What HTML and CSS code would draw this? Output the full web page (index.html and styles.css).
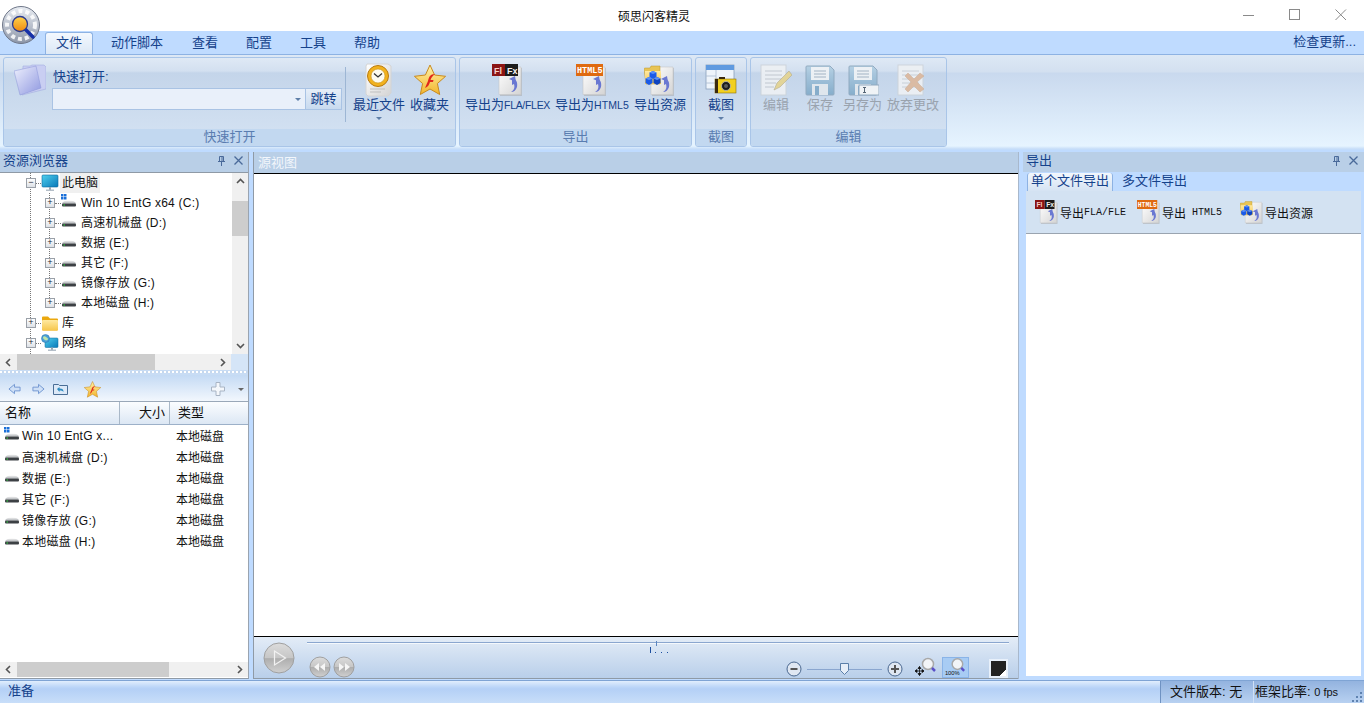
FILE: index.html
```html
<!DOCTYPE html>
<html lang="zh">
<head>
<meta charset="utf-8">
<title>硕思闪客精灵</title>
<link rel="stylesheet" href="styles.css">
</head>
<body>
<svg class="defs" width="0" height="0" aria-hidden="true">
  <defs>
    <linearGradient id="pg" x1="0" y1="0" x2="1" y2="1"><stop offset="0" stop-color="#fff"/><stop offset="1" stop-color="#d4d4d4"/></linearGradient>
    <linearGradient id="hd" x1="0" y1="0" x2="0" y2="1"><stop offset="0" stop-color="#f4f4f4"/><stop offset="1" stop-color="#aeb2b6"/></linearGradient>
    <linearGradient id="mon" x1="0" y1="0" x2="1" y2="1"><stop offset="0" stop-color="#4fd0ee"/><stop offset="1" stop-color="#0a78b8"/></linearGradient>
    <linearGradient id="fold" x1="0" y1="0" x2="0" y2="1"><stop offset="0" stop-color="#ffe9a0"/><stop offset="1" stop-color="#f6c64c"/></linearGradient>
    <linearGradient id="star" x1="0" y1="0" x2="0" y2="1"><stop offset="0" stop-color="#fff2a8"/><stop offset="1" stop-color="#f3b52c"/></linearGradient>
    <linearGradient id="btn" x1="0" y1="0" x2="0" y2="1"><stop offset="0" stop-color="#dcdcdc"/><stop offset=".5" stop-color="#c6c6c6"/><stop offset=".52" stop-color="#aeaeae"/><stop offset="1" stop-color="#d0d0d0"/></linearGradient>
    <linearGradient id="lens" x1="0" y1="0" x2="0" y2="1"><stop offset="0" stop-color="#ffd24a"/><stop offset="1" stop-color="#ef8a10"/></linearGradient>
    <linearGradient id="gear" x1="0" y1="0" x2="0" y2="1"><stop offset="0" stop-color="#e9edf3"/><stop offset="1" stop-color="#8d96a8"/></linearGradient>
    <linearGradient id="fldr" x1="0" y1="0" x2="1" y2="1"><stop offset="0" stop-color="#eef0fd"/><stop offset="1" stop-color="#8f98e0"/></linearGradient>
    <linearGradient id="flop" x1="0" y1="0" x2="0" y2="1"><stop offset="0" stop-color="#b3cfe3"/><stop offset="1" stop-color="#7fa9c8"/></linearGradient>

    <symbol id="i-drive" viewBox="0 0 16 16">
      <path d="M1 9.500C1.500 7.500 4 6.500 8 6.500s6.500 1 7 3z" fill="url(#hd)"/>
      <rect x="1" y="9.500" width="14" height="3" rx="1" fill="#3c4044"/>
      <rect x="2.500" y="10.500" width="1.500" height="1" fill="#30e040"/>
    </symbol>
    <symbol id="i-win" viewBox="0 0 16 16">
      <path d="M0 0h2.500v2.500H0zM3 0h2.500v2.500H3zM0 3h2.500v2.500H0zM3 3h2.500v2.500H3z" fill="#1a6fd8"/>
      <use href="#i-drive"/>
    </symbol>
    <symbol id="i-monitor" viewBox="0 0 18 18">
      <rect x="1" y="1" width="16" height="12" rx="1" fill="url(#mon)" stroke="#0b6a9e" stroke-width=".6"/>
      <rect x="8" y="13" width="2" height="3" fill="#9aa8b4"/><rect x="5" y="15.500" width="8" height="1.500" fill="#b4bec8"/>
    </symbol>
    <symbol id="i-lib" viewBox="0 0 18 18">
      <path d="M1 3.500a1 1 0 0 1 1-1h5l2 2h7a1 1 0 0 1 1 1v10a1 1 0 0 1-1 1H2a1 1 0 0 1-1-1z" fill="#eba80e"/>
      <rect x="1" y="6" width="16" height="10.500" rx="1" fill="url(#fold)"/>
    </symbol>
    <symbol id="i-net" viewBox="0 0 18 18">
      <rect x="4" y="4" width="13" height="9.500" rx="1" fill="url(#mon)" stroke="#0b6a9e" stroke-width=".5"/>
      <rect x="10" y="13.500" width="2" height="2.500" fill="#9aa8b4"/><rect x="7" y="15.500" width="8" height="1.500" fill="#b4bec8"/>
      <circle cx="4.500" cy="4.500" r="4" fill="#4b9fd8" stroke="#2773a8" stroke-width=".5"/>
      <path d="M2 3c1-1 2-1 3 0s2 1 2 2-2 2-3 1-2-1-2-3z" fill="#bfe6a8"/>
    </symbol>
    <symbol id="i-page" viewBox="0 0 32 32">
      <path d="M8 4h22v28H8z" fill="#a8a8a8" opacity=".5"/>
      <path d="M7 3h22v27.500H7z" fill="url(#pg)" stroke="#c8c8c8" stroke-width=".6"/>
      <path d="M20 14c4 1 6 4 5 9-1 3-3 5-6 5 3-2 4-4 3-8l-2 1z" fill="#6a78d2"/>
      <path d="M17 15l6-3 1 6z" fill="#6a78d2"/>
    </symbol>
    <symbol id="i-fl" viewBox="0 0 32 32">
      <use href="#i-page"/>
      <rect x="0" y="0" width="13" height="12" fill="#8a1414"/><rect x="13" y="0" width="13" height="12" fill="#1c1c1c"/>
      <text x="2" y="9.500" class="svg-t" fill="#f8d0c8">Fl</text><text x="15" y="9.500" class="svg-t" fill="#f4f4f4">Fx</text>
    </symbol>
    <symbol id="i-html" viewBox="0 0 32 32">
      <use href="#i-page"/>
      <rect x="0" y="0" width="27" height="12" fill="#df6a10"/>
      <text x="1" y="9.300" class="svg-h" fill="#fff">HTML5</text>
    </symbol>
    <symbol id="i-res" viewBox="0 0 32 32">
      <use href="#i-page"/>
      <path d="M0 5a1 1 0 0 1 1-1h5l1-2h9v18H2z" fill="#e8c455" stroke="#b8962c" stroke-width=".5"/>
      <rect x="1" y="7" width="16" height="13" fill="url(#fold)"/>
      <path d="M5.500 8.500L9 7l3.500 1.500V13L9 15l-3.500-2z" fill="#1a5ae8"/><path d="M5.500 8.500L9 10l3.500-1.500L9 7z" fill="#5a90f8"/>
      <path d="M1.500 14.500L5 13l3.500 1.500V19L5 21l-3.500-2z" fill="#1a5ae8"/><path d="M1.500 14.500L5 16l3.500-1.500L5 13z" fill="#5a90f8"/>
      <path d="M9.500 14.500L13 13l3.500 1.500V19L13 21l-3.500-2z" fill="#0f44c0"/><path d="M9.500 14.500L13 16l3.500-1.500L13 13z" fill="#5a90f8"/>
    </symbol>
    <symbol id="i-shot" viewBox="0 0 32 32">
      <rect x="1" y="1" width="28" height="24" fill="#eef4fb" stroke="#8aa0bc" stroke-width=".8"/>
      <rect x="1" y="1" width="28" height="5" fill="#5f9ae0"/>
      <path d="M1 12h10M1 19h10M11 6v19" stroke="#a8bad0" stroke-width=".8"/>
      <rect x="10" y="15" width="21" height="14" fill="#f2d020" stroke="#8a7010" stroke-width=".6"/>
      <rect x="10" y="15" width="3" height="14" fill="#3a2a10"/><rect x="14" y="13" width="6" height="2" fill="#3a2a10"/>
      <circle cx="21" cy="22" r="4.500" fill="#1c1c1c" stroke="#c8c8c8" stroke-width=".7"/><circle cx="21" cy="22" r="2" fill="#5a5a5a"/>
    </symbol>
    <symbol id="i-edit" viewBox="0 0 32 32">
      <rect x="1" y="1" width="25" height="30" fill="#eef1f4" stroke="#cdd3da"/>
      <path d="M5 7h17M5 11h17M5 15h17M5 19h11M5 23h9" stroke="#c0c6ce"/>
      <path d="M14 26l3-7 12-12 3 4-12 12z" fill="#e6d490" stroke="#b0a888" stroke-width=".6"/>
    </symbol>
    <symbol id="i-save" viewBox="0 0 32 32">
      <path d="M2 3a1 1 0 0 1 1-1h23l4 4v24a1 1 0 0 1-1 1H3a1 1 0 0 1-1-1z" fill="url(#flop)" stroke="#8ca6bc"/>
      <rect x="7" y="3" width="18" height="13" fill="#f0f3f6"/><path d="M10 7h12M10 10h12M10 13h12" stroke="#9fb0c0"/>
      <rect x="8" y="20" width="16" height="11" fill="#e2e8ee"/><rect x="11" y="22" width="4" height="9" fill="#7fa9c8"/>
    </symbol>
    <symbol id="i-saveas" viewBox="0 0 32 32">
      <use href="#i-save"/>
      <rect x="12" y="21" width="20" height="10" fill="#f4f6f8" stroke="#8ca6bc"/>
      <path d="M16 23.500h3M17.500 23.500v5M16 28.500h3" stroke="#4a5a6a" fill="none"/>
    </symbol>
    <symbol id="i-discard" viewBox="0 0 32 32">
      <rect x="1" y="1" width="25" height="30" fill="#eef1f4" stroke="#cdd3da"/>
      <path d="M5 7h17M5 11h17M5 15h17M5 19h17M5 23h17" stroke="#c8ced6"/>
      <path d="M8 12l3-3 6 6 6-6 4 3-7 6 7 7-4 3-6-6-6 6-3-3 6-7z" fill="#ddb89c" stroke="#c8a88e" stroke-width=".5"/>
    </symbol>
    <symbol id="i-clock" viewBox="0 0 32 34">
      <path d="M4 1h21l3 2v27l-3 3H5l-2-2V3z" fill="url(#pg)" stroke="#d4d4d4"/>
      <path d="M7 26h15M7 29h11" stroke="#bfbfbf"/>
      <circle cx="15" cy="13" r="10.500" fill="#f2b21e" stroke="#b87a10"/>
      <circle cx="15" cy="13" r="7" fill="#fdfbf0" stroke="#c89018" stroke-width=".6"/>
      <path d="M11 10.500l4 3.500 4-3.500" fill="none" stroke="#333" stroke-width="1.300"/>
    </symbol>
    <symbol id="i-star" viewBox="0 0 32 32">
      <path d="M16 1l4.600 10 11 1.300-8.200 7.200 2.300 11-9.700-5.500-9.700 5.500 2.300-11L.4 12.300l11-1.300z" fill="url(#star)" stroke="#c88a20" stroke-linejoin="round"/>
      <path d="M21 10c-5 0-6 3-7 7l-3 7c3-1 4-3 5-6h3l.5-2h-3c.5-2 2-4 4.500-6z" fill="#e0281c"/>
    </symbol>
    <symbol id="i-bigfolder" viewBox="0 0 32 34">
      <path d="M9 3h7l2-1h12l2 2v22l-24 6z" fill="#c9cef2" stroke="#9aa4dc" stroke-width=".5"/>
      <path d="M0 8l22-5 5 22L6 32z" fill="url(#fldr)" stroke="#8a94d8" stroke-width=".5"/>
    </symbol>
  </defs>
</svg>

<div class="app">
  <svg class="logo" viewBox="0 0 38 38" aria-hidden="true">
    <circle cx="19" cy="19" r="18.500" fill="url(#gear)" stroke="#6e7688"/>
    <circle cx="19" cy="19" r="14" fill="none" stroke="#fff" stroke-width="4" stroke-dasharray="4 3" opacity=".85"/>
    <path d="M23 23l8 8" stroke="#1630a8" stroke-width="3.500" stroke-linecap="round"/>
    <circle cx="18" cy="18" r="7.500" fill="url(#lens)" stroke="#2a3a90" stroke-width="1.300"/>
  </svg>

  <header class="titlebar">
    <span></span>
    <span class="title-text">硕思闪客精灵</span>
    <div class="win-btns">
      <span class="win-btn"><svg width="12" height="12" viewBox="0 0 12 12"><path d="M0 6.500h11" stroke="#8a8a8a"/></svg></span>
      <span class="win-btn"><svg width="12" height="12" viewBox="0 0 12 12"><rect x=".5" y=".5" width="10" height="10" fill="none" stroke="#8a8a8a"/></svg></span>
      <span class="win-btn"><svg width="12" height="12" viewBox="0 0 12 12"><path d="M.5.500l10.500 10.500M11 .5L.5 11" stroke="#8a8a8a"/></svg></span>
    </div>
  </header>

  <nav class="tabs">
    <span class="tab tab-active">文件</span>
    <span class="tab tab-script">动作脚本</span>
    <span class="tab">查看</span>
    <span class="tab">配置</span>
    <span class="tab">工具</span>
    <span class="tab">帮助</span>
    <span class="tab-update">检查更新...</span>
  </nav>

  <section class="ribbon">
    <div class="group group-open">
      <div class="group-body body-open">
        <svg class="big-folder" aria-hidden="true"><use href="#i-bigfolder"/></svg>
        <div class="open-form">
          <span class="open-label">快速打开:</span>
          <div class="combo">
            <span class="combo-input"><i class="arrow"></i></span>
            <span class="combo-btn">跳转</span>
          </div>
        </div>
        <span class="rib-sep"></span>
        <div class="rib-btn btn-recent"><svg class="rib-ico"><use href="#i-clock"/></svg><span class="rib-label">最近文件</span><i class="arrow"></i></div>
        <div class="rib-btn btn-fav"><svg class="rib-ico"><use href="#i-star"/></svg><span class="rib-label">收藏夹</span><i class="arrow"></i></div>
      </div>
      <div class="group-label">快速打开</div>
    </div>

    <div class="group group-export">
      <div class="group-body body-export">
        <div class="rib-btn"><svg class="rib-ico"><use href="#i-fl"/></svg><span class="rib-label">导出为<span class="lat">FLA/FLEX</span></span></div>
        <div class="rib-btn"><svg class="rib-ico"><use href="#i-html"/></svg><span class="rib-label">导出为<span class="lat lat-h">HTML5</span></span></div>
        <div class="rib-btn"><svg class="rib-ico"><use href="#i-res"/></svg><span class="rib-label">导出资源</span></div>
      </div>
      <div class="group-label">导出</div>
    </div>

    <div class="group group-shot">
      <div class="group-body body-shot">
        <div class="rib-btn"><svg class="rib-ico"><use href="#i-shot"/></svg><span class="rib-label">截图</span><i class="arrow"></i></div>
      </div>
      <div class="group-label">截图</div>
    </div>

    <div class="group group-edit">
      <div class="group-body body-edit">
        <div class="rib-btn off"><svg class="rib-ico"><use href="#i-edit"/></svg><span class="rib-label">编辑</span></div>
        <div class="rib-btn off b-save"><svg class="rib-ico"><use href="#i-save"/></svg><span class="rib-label">保存</span></div>
        <div class="rib-btn off b-saveas"><svg class="rib-ico"><use href="#i-saveas"/></svg><span class="rib-label">另存为</span></div>
        <div class="rib-btn off"><svg class="rib-ico"><use href="#i-discard"/></svg><span class="rib-label">放弃更改</span></div>
      </div>
      <div class="group-label">编辑</div>
    </div>
  </section>

  <main class="panels">
    <aside class="left">
      <div class="pane-head">
        <span class="pane-title">资源浏览器</span>
        <span class="pane-ctl"><svg width="9" height="10" viewBox="0 0 9 10"><path d="M2.500.5h4v5h-4zM1 5.500h7M4.500 5.500V10M5 1v4" fill="none" stroke="#4a6a9a"/></svg><svg width="9" height="9" viewBox="0 0 9 9"><path d="M.5.500l8 8M8.500.5l-8 8" stroke="#4a6a9a" stroke-width="1.300"/></svg></span>
      </div>

      <div class="tree-wrap">
        <div class="tree">
          <div class="t-row"><span class="exp">−</span><i class="dots"></i><svg class="t-ico"><use href="#i-monitor"/></svg><span class="t-text t-sel">此电脑</span></div>
          <div class="t-kids">
            <div class="t-row t-kid"><span class="exp">+</span><i class="dots dots-s"></i><svg class="d-ico"><use href="#i-win"/></svg><span class="t-text">Win 10 EntG x64 (C:)</span></div>
            <div class="t-row t-kid"><span class="exp">+</span><i class="dots dots-s"></i><svg class="d-ico"><use href="#i-drive"/></svg><span class="t-text">高速机械盘 (D:)</span></div>
            <div class="t-row t-kid"><span class="exp">+</span><i class="dots dots-s"></i><svg class="d-ico"><use href="#i-drive"/></svg><span class="t-text">数据 (E:)</span></div>
            <div class="t-row t-kid"><span class="exp">+</span><i class="dots dots-s"></i><svg class="d-ico"><use href="#i-drive"/></svg><span class="t-text">其它 (F:)</span></div>
            <div class="t-row t-kid"><span class="exp">+</span><i class="dots dots-s"></i><svg class="d-ico"><use href="#i-drive"/></svg><span class="t-text">镜像存放 (G:)</span></div>
            <div class="t-row t-kid"><span class="exp">+</span><i class="dots dots-s"></i><svg class="d-ico"><use href="#i-drive"/></svg><span class="t-text">本地磁盘 (H:)</span></div>
          </div>
          <div class="t-row"><span class="exp">+</span><i class="dots"></i><svg class="t-ico"><use href="#i-lib"/></svg><span class="t-text">库</span></div>
          <div class="t-row"><span class="exp">+</span><i class="dots"></i><svg class="t-ico"><use href="#i-net"/></svg><span class="t-text">网络</span></div>
        </div>
        <div class="vscroll">
          <svg class="chev" viewBox="0 0 9 9"><path d="M1 6l3.500-3.500L8 6" fill="none" stroke="#555" stroke-width="1.600"/></svg>
          <span class="vtrack"><i class="vthumb"></i></span>
          <svg class="chev" viewBox="0 0 9 9"><path d="M1 3l3.500 3.500L8 3" fill="none" stroke="#555" stroke-width="1.600"/></svg>
        </div>
      </div>
      <div class="hscroll hs-tree">
        <svg class="chev" viewBox="0 0 9 9"><path d="M6 1L2.500 4.500 6 8" fill="none" stroke="#555" stroke-width="1.600"/></svg>
        <span class="htrack"><i class="hthumb th-tree"></i></span>
        <svg class="chev" viewBox="0 0 9 9"><path d="M3 1l3.500 3.500L3 8" fill="none" stroke="#555" stroke-width="1.600"/></svg>
        <span class="corner"></span>
      </div>

      <div class="splitter"></div>

      <div class="list-tools">
        <svg class="lt lt-back" viewBox="0 0 14 12"><path d="M7 1L1 6l6 5V8h6V4H7z" fill="#cfe0f6" stroke="#6f95d0"/></svg>
        <svg class="lt lt-fwd" viewBox="0 0 14 12"><path d="M7 1l6 5-6 5V8H1V4h6z" fill="#cfe0f6" stroke="#6f95d0"/></svg>
        <svg class="lt lt-up" viewBox="0 0 15 12"><path d="M.5 1.500h5l1 1h8v9H.5z" fill="#dce9f8" stroke="#4a6e96"/><path d="M4 6l2.500-2v1.500c3 0 4 1 4 3.500-1-1.500-2-1.500-4-1.500V9z" fill="#2a8ac0"/></svg>
        <svg class="lt lt-star" viewBox="0 0 32 32"><use href="#i-star"/></svg>
        <span class="lt-spacer"></span>
        <svg class="lt lt-add" viewBox="0 0 14 14"><path d="M5 .5h4v4.500h4.500v4H9v4.500H5V9H.5V5H5z" fill="#f4f7fb" stroke="#a8b4c4"/></svg>
        <i class="arrow arrow-gray"></i>
      </div>

      <div class="list-head">
        <span class="lh lh-name">名称</span>
        <span class="lh lh-size">大小</span>
        <span class="lh lh-type">类型</span>
      </div>

      <div class="list">
        <div class="l-row"><svg class="l-ico"><use href="#i-win"/></svg><span class="l-name">Win 10 EntG x...</span><span class="l-type">本地磁盘</span></div>
        <div class="l-row"><svg class="l-ico"><use href="#i-drive"/></svg><span class="l-name">高速机械盘 (D:)</span><span class="l-type">本地磁盘</span></div>
        <div class="l-row"><svg class="l-ico"><use href="#i-drive"/></svg><span class="l-name">数据 (E:)</span><span class="l-type">本地磁盘</span></div>
        <div class="l-row"><svg class="l-ico"><use href="#i-drive"/></svg><span class="l-name">其它 (F:)</span><span class="l-type">本地磁盘</span></div>
        <div class="l-row"><svg class="l-ico"><use href="#i-drive"/></svg><span class="l-name">镜像存放 (G:)</span><span class="l-type">本地磁盘</span></div>
        <div class="l-row"><svg class="l-ico"><use href="#i-drive"/></svg><span class="l-name">本地磁盘 (H:)</span><span class="l-type">本地磁盘</span></div>
      </div>

      <div class="hscroll hs-list">
        <svg class="chev" viewBox="0 0 9 9"><path d="M6 1L2.500 4.500 6 8" fill="none" stroke="#555" stroke-width="1.600"/></svg>
        <span class="htrack"><i class="hthumb th-list"></i></span>
        <svg class="chev" viewBox="0 0 9 9"><path d="M3 1l3.500 3.500L3 8" fill="none" stroke="#555" stroke-width="1.600"/></svg>
      </div>
    </aside>

    <section class="center">
      <div class="src-head">源视图</div>
      <div class="canvas"></div>
      <div class="player">
        <svg class="play" viewBox="0 0 32 32"><circle cx="16" cy="16" r="15" fill="url(#btn)" stroke="#a0a0a0"/><path d="M11.500 9l11 7-11 7z" fill="none" stroke="#f2f2f2" stroke-width="1.200"/></svg>
        <div class="player-main">
          <div class="timeline"><i class="tick"></i></div>
          <div class="tl-marks"><i class="mark"></i><i class="dot"></i><i class="dot"></i><i class="dot"></i></div>
          <div class="player-row">
            <svg class="seek" viewBox="0 0 22 22"><circle cx="11" cy="11" r="10" fill="url(#btn)" stroke="#a0a0a0"/><path d="M10 7l-5 4 5 4zM16 7l-5 4 5 4z" fill="#f6f6f6"/></svg>
            <svg class="seek" viewBox="0 0 22 22"><circle cx="11" cy="11" r="10" fill="url(#btn)" stroke="#a0a0a0"/><path d="M6 7l5 4-5 4zM12 7l5 4-5 4z" fill="#f6f6f6"/></svg>
            <span class="row-spacer"></span>
            <svg class="zoom-b" viewBox="0 0 16 16"><circle cx="8" cy="8" r="7" fill="#dfe7f2" stroke="#4a6890"/><path d="M4.500 8h7" stroke="#555" stroke-width="2"/></svg>
            <span class="slider"><svg class="thumb" viewBox="0 0 9 12"><path d="M.5.500h8v7L4.500 11.500.5 7.500z" fill="#e6eef8" stroke="#5a7ea8"/></svg></span>
            <svg class="zoom-b" viewBox="0 0 16 16"><circle cx="8" cy="8" r="7" fill="#dfe7f2" stroke="#4a6890"/><path d="M4 8h8M8 4v8" stroke="#555" stroke-width="2"/></svg>
            <svg class="mag" viewBox="0 0 24 20"><path d="M1 14h9M5.500 9.500v9M1 14l2-1.500v3zM10 14l-2-1.500v3zM5.500 9.500L4 11.500h3zM5.500 18.500L4 16.500h3z" stroke="#111" fill="#111" stroke-width=".8"/><circle cx="14" cy="7" r="5.500" fill="#f2f4f7" stroke="#a8a8a8" stroke-width="1.500"/><path d="M18 11l3 3" stroke="#5a50c8" stroke-width="2.500"/></svg>
            <span class="z100"><svg viewBox="0 0 26 20" width="26" height="20"><circle cx="15" cy="7" r="5.500" fill="#f2f4f7" stroke="#a8a8a8" stroke-width="1.500"/><path d="M19 11l3 3" stroke="#5a50c8" stroke-width="2.500"/><text x="2" y="18" class="svg-z">100%</text></svg></span>
            <span class="swatch"></span>
          </div>
        </div>
      </div>
    </section>

    <aside class="right">
      <div class="pane-head head-right">
        <span class="pane-title">导出</span>
        <span class="pane-ctl"><svg width="9" height="10" viewBox="0 0 9 10"><path d="M2.500.5h4v5h-4zM1 5.500h7M4.500 5.500V10M5 1v4" fill="none" stroke="#4a6a9a"/></svg><svg width="9" height="9" viewBox="0 0 9 9"><path d="M.5.500l8 8M8.500.5l-8 8" stroke="#4a6a9a" stroke-width="1.300"/></svg></span>
      </div>
      <div class="r-tabs">
        <span class="r-tab r-active">单个文件导出</span>
        <span class="r-tab">多文件导出</span>
      </div>
      <div class="r-tools">
        <span class="r-btn"><svg class="r-ico"><use href="#i-fl"/></svg>导出<span class="mono">FLA/FLE</span></span>
        <span class="r-btn"><svg class="r-ico"><use href="#i-html"/></svg>导出<span class="mono"> HTML5</span></span>
        <span class="r-btn r-res"><svg class="r-ico"><use href="#i-res"/></svg>导出资源</span>
      </div>
      <div class="r-body"></div>
    </aside>
  </main>

  <footer class="status">
    <span class="st-ready">准备</span>
    <div class="st-right">
      <span class="st-cell st-ver">文件版本: 无</span>
      <span class="st-cell st-fps">框架比率: <span class="st-small">0 fps</span></span>
      <svg class="grip" viewBox="0 0 11 11"><path d="M8 1h2v2H8zM4 5h2v2H4zM8 5h2v2H8zM0 9h2v2H0zM4 9h2v2H4zM8 9h2v2H8z" fill="#5f82b0"/></svg>
    </div>
  </footer>
</div>
</body>
</html>
```

FILE: styles.css
```css
* { box-sizing: border-box; }
html, body { margin: 0; padding: 0; }
body {
  width: 1364px; height: 703px; overflow: hidden; background: #bfdbff;
  font-family: "Liberation Sans", "Noto Sans CJK SC", sans-serif;
  font-size: 12px; color: #000;
}
.defs { position: absolute; }
.svg-t { font: bold 9px "Liberation Sans", sans-serif; }
.svg-h { font: bold 8.500px "Liberation Mono", monospace; }
.svg-z { font: 6px "Liberation Sans", sans-serif; fill: #111; }
i { display: block; }

.app { position: relative; width: 1364px; height: 703px; display: flex; flex-direction: column; }
.logo { position: absolute; left: 2px; top: 6px; width: 38px; height: 38px; }

/* title */
.titlebar { height: 31px; background: #fff; display: grid; grid-template-columns: 618px auto 1fr; align-items: center; flex: none; }
.title-text { font-size: 12px; color: #111; }
.win-btns { display: flex; justify-content: flex-end; }
.win-btn { width: 46px; height: 31px; display: flex; align-items: center; justify-content: center; padding-bottom: 2px; }

/* tabs */
.tabs { height: 23px; background: #bfdbff; display: flex; align-items: flex-end; padding-left: 45px; flex: none; }
.tab { height: 21px; line-height: 20px; padding: 0 14px; font-size: 13px; color: #15428b; }
.tab-script { padding-right: 15px; }
.tab-active {
  padding: 0 10px; margin-right: 4px; height: 22px; border: 1px solid #8db2e3; border-bottom: 0;
  border-radius: 3px 3px 0 0; background: linear-gradient(#f3f8fe, #dce8f6);
}
.tab-update { margin-left: auto; margin-right: 8px; font-size: 13px; color: #15428b; height: 23px; line-height: 21px; }

/* ribbon */
.ribbon {
  height: 96px; flex: none; display: flex; padding: 2px 0 0 3px; gap: 3px;
  border-top: 1px solid #8db2e3;
  background: linear-gradient(#dde8f5 0, #d3e0f0 17px, #c9d9ee 18px, #e6f4ff 91px, #c6ddf8 94px, #bfdbff 96px);
}
.group {
  height: 90px; border: 1px solid #a9c5e8; border-radius: 3px; display: flex; flex-direction: column; flex: none;
  background: linear-gradient(#dfe9f5 0, #d3e0f0 13px, #c4d5ea 15px, #d5e3f3 100%);
}
.group-open { width: 453px; }
.group-export { width: 233px; }
.group-shot { width: 52px; }
.group-edit { width: 197px; }
.group-body { flex: 1; display: flex; min-height: 0; }
.group-label {
  height: 17px; line-height: 16px; text-align: center; font-size: 13px; color: #5a7db0;
  background: #c2d8f0; border-radius: 0 0 2px 2px;
}
.body-open { padding: 5px 0 0 10px; }
.body-export { padding: 5px 0 0 5px; gap: 5px; }
.body-shot { padding: 5px 0 0 0; justify-content: center; }
.body-edit { padding: 5px 0 0 9px; gap: 5px; }
.b-save { margin-left: 7px; margin-right: 2px; }
.big-folder { width: 32px; height: 34px; margin-top: 0; flex: none; }
.open-form { margin-left: 6px; display: flex; flex-direction: column; width: 290px; }
.open-label { font-size: 13px; line-height: 16px; color: #15428b; margin-top: 6px; margin-left: 1px; height: 19px; }
.combo { display: flex; height: 22px; border: 1px solid #a9c3e4; }
.combo-input { flex: 1; background: #e9f0fa; display: flex; align-items: center; justify-content: flex-end; padding-right: 4px; }
.combo-btn {
  width: 36px; text-align: center; line-height: 19px; font-size: 13px; color: #15428b;
  border-left: 1px solid #a9c3e4; background: linear-gradient(#e6eef8, #c8daef);
}
.arrow { width: 0; height: 0; border: 3px solid transparent; border-top: 3px solid #5f7fa8; border-bottom: 0; }
.rib-sep { width: 1px; height: 55px; margin: 4px 7px 0 3px; background: #9db6d4; flex: none; }
.rib-btn { display: flex; flex-direction: column; align-items: center; flex: none; }
.rib-ico { width: 32px; height: 34px; flex: none; }
.rib-label { font-size: 13px; line-height: 16px; height: 19px; color: #15428b; white-space: nowrap; }
.rib-btn .arrow { margin-top: 1px; }
.btn-fav { margin-left: 5px; }
.lat { font-size: 10.500px; letter-spacing: -.3px; }
.lat-h { letter-spacing: .1px; }
.off .rib-ico { opacity: .9; }
.off .rib-label { color: #9aa3ae; }

/* panels */
.panels { flex: 1; min-height: 0; display: flex; padding-top: 2px; background: #bfdbff; }
.left { width: 249px; flex: none; display: flex; flex-direction: column; border-right: 1px solid #9aa4b0; border-bottom: 1px solid #8f9aa6; padding-bottom: 1px; height: 527px; background: #fff; }
.pane-head { height: 21px; flex: none; background: #b9cfe7; display: flex; align-items: center; justify-content: space-between; padding: 0 5px 3px 3px; border-bottom: 1px solid #8f9aa6; }
.pane-title { font-size: 13px; color: #15428b; line-height: 16px; }
.pane-ctl { display: flex; gap: 8px; align-items: center; }

.tree-wrap { height: 181px; flex: none; display: flex; background: #fff; }
.tree {
  flex: 1; min-width: 0;
  background: repeating-linear-gradient(#777 0 1px, transparent 1px 2px) 30px 0 / 1px 100% no-repeat;
}
.t-row { height: 20px; display: flex; align-items: center; padding-left: 26px; }
.exp {
  width: 10px; height: 10px; border: 1px solid #9aa0a8; background: linear-gradient(#fff, #dde1e6); flex: none;
  font: 9px/8px "Liberation Mono", monospace; text-align: center; color: #223;
}
.dots { width: 5px; height: 0; border-top: 1px dotted #777; flex: none; }
.dots-s { width: 6px; }
.t-ico { width: 18px; height: 18px; flex: none; }
.d-ico { width: 16px; height: 16px; margin-top: -2px; flex: none; }
.t-text { margin-left: 2px; line-height: 18px; white-space: nowrap; padding: 0 1px; font-size: 12px; color: #111; }
.t-sel { background: #f0f0f0; margin-left: 1px; width: 40px; height: 20px; line-height: 20px; padding: 0 1px 0 2px; }
.t-kid { padding-left: 45px; }
.t-kid .t-text { margin-left: 3px; letter-spacing: .22px; }
.t-kids { background: repeating-linear-gradient(#777 0 1px, transparent 1px 2px) 49px 0 / 1px 90% no-repeat; }

.vscroll { width: 17px; flex: none; background: #f0f0f0; display: flex; flex-direction: column; align-items: center; border-left: 1px solid #fff; }
.chev { width: 9px; height: 9px; flex: none; margin: 4px; }
.vtrack { flex: 1; align-self: stretch; padding-top: 11px; }
.vthumb { height: 35px; background: #cdcdcd; width: 100%; }
.hscroll { height: 16px; flex: none; display: flex; align-items: center; background: #f0f0f0; }
.htrack { flex: 1; align-self: stretch; }
.hthumb { height: 100%; background: #cdcdcd; }
.th-tree { width: 138px; }
.th-list { width: 152px; }
.corner { width: 17px; align-self: stretch; background: #d5e5f7; }
.hs-list { height: 15px; }

.splitter {
  height: 5px; flex: none;
  background: repeating-linear-gradient(90deg, #fff 0 2px, #c5d8ef 2px 4px) 0 1px / 100% 2px no-repeat, #c8dcf4;
}
.list-tools {
  height: 26px; flex: none; display: flex; align-items: center; padding: 2px 4px 0 8px;
  background: linear-gradient(#c4daf4, #f2f7fd);
}
.lt { flex: none; }
.lt-back { width: 13px; height: 12px; }
.lt-fwd { width: 13px; height: 12px; margin-left: 11px; }
.lt-up { width: 15px; height: 12px; margin-left: 8px; }
.lt-star { width: 17px; height: 17px; margin-left: 16px; }
.lt-spacer { flex: 1; }
.lt-add { width: 14px; height: 14px; margin-right: 1px; }
.arrow-gray { margin-left: 12px; border-top-color: #666; }

.list-head { height: 24px; flex: none; display: flex; background: linear-gradient(#fbfdff, #dce7f4); border-top: 1px solid #9aa8b8; border-bottom: 1px solid #9cb0c8; }
.lh { font-size: 13px; color: #111; line-height: 22px; border-right: 1px solid #a9b8c8; }
.lh-name { width: 120px; padding-left: 5px; }
.lh-size { width: 50px; text-align: right; padding-right: 4px; }
.lh-type { flex: 1; padding-left: 8px; border-right: 0; }
.list { flex: 1; min-height: 0; background: #fff; }
.l-row { height: 21px; display: flex; align-items: center; padding-left: 4px; }
.l-ico { width: 16px; height: 16px; flex: none; margin-top: -2px; }
.l-name { width: 154px; margin-left: 2px; font-size: 12px; color: #111; letter-spacing: .25px; white-space: nowrap; }
.l-type { font-size: 12px; color: #111; }

.center { width: 766px; margin-left: 4px; flex: none; display: flex; flex-direction: column; height: 527px; border-left: 1px solid #8f9aa6; border-right: 1px solid #a8b8cc; }
.src-head { height: 21px; flex: none; background: #b9cfe7; color: #f2f6fb; font-size: 13px; padding-left: 4px; line-height: 21px; }
.canvas { flex: 1; min-height: 0; background: #fff; border-top: 1px solid #000; border-bottom: 1px solid #000; }
.player { height: 42px; flex: none; display: flex; padding-left: 9px; background: linear-gradient(#e3ecf7, #b9cfea); border-bottom: 1px solid #8f9aa6; }
.play { width: 32px; height: 32px; margin-top: 5px; flex: none; }
.player-main { flex: 1; min-width: 0; display: flex; flex-direction: column; padding: 5px 9px 0 12px; }
.timeline { height: 2px; background: #8aa6cf; border-bottom: 1px solid #f4f8fc; display: flex; padding-left: 349px; flex: none; }
.tick { width: 1px; height: 5px; margin-top: -1px; background: #5c86c0; }
.tl-marks { height: 5px; margin-top: 4px; display: flex; align-items: flex-end; padding-left: 343px; gap: 5px; flex: none; }
.mark { width: 1px; height: 6px; background: #1d4fa0; margin-right: -1px; }
.dot { width: 1px; height: 1px; background: #1d4fa0; }
.player-row { display: flex; align-items: center; height: 22px; margin-top: 3px; }
.seek { width: 22px; height: 22px; flex: none; margin-right: 2px; margin-left: 2px; }
.seek + .seek { margin-left: 0; }
.row-spacer { flex: 1; }
.zoom-b { width: 16px; height: 16px; flex: none; margin-top: 4px; }
.slider { width: 75px; height: 1px; background: #8aa6cf; display: flex; justify-content: center; margin: 4px 5px 0; }
.thumb { width: 9px; height: 12px; margin-top: -6px; }
.mag { width: 24px; height: 20px; margin-left: 11px; flex: none; }
.z100 { width: 27px; height: 21px; margin-left: 4px; background: #a8ccf4; border: 1px solid #8ab4e8; display: flex; align-items: center; justify-content: center; flex: none; }
.swatch { width: 15px; height: 15px; margin-left: 22px; margin-right: 3px; margin-top: 2px; flex: none; background: linear-gradient(135deg, #222 0 80%, #fff 80%); outline: 2px solid #e8f0fa; }

.right { flex: 1; display: flex; flex-direction: column; margin-left: 4px; height: 524px; padding: 0 3px; }
.head-right { margin: 0 -3px; padding: 0 6px 3px 3px; height: 20px; border-bottom: 0; }
.r-tabs { height: 19px; flex: none; display: flex; align-items: flex-end; gap: 8px; padding-left: 1px; margin-right: -3px; }
.r-tab { font-size: 13px; color: #15428b; height: 18px; line-height: 16px; padding: 0 1px; }
.r-active { background: linear-gradient(#f2f7fd, #d5e3f3); padding: 0 3px; border: 1px solid #8db2e3; border-width: 0 1px; border-radius: 3px 3px 0 0; }
.r-tools { height: 43px; flex: none; background: #d3e2f2; display: flex; align-items: center; padding: 0 0 0 9px; border-bottom: 1px solid #9aa4b0; gap: 11px; font-size: 12px; white-space: pre; }
.r-btn { display: flex; align-items: center; color: #111; }
.r-res { margin-left: 7px; }
.r-ico { width: 24px; height: 24px; margin-right: 1px; flex: none; }
.mono { font: 10px "Liberation Mono", monospace; color: #111; }
.r-body { flex: 1; background: #fff; min-height: 0; }

/* status */
.status {
  height: 23px; flex: none; display: flex; justify-content: space-between; align-items: stretch;
  border-top: 1px solid #7fa4d4;
  background: linear-gradient(#e1eefd 0, #bcd6f8 6px, #b4d0f6 8px, #c8def9 100%);
}
.st-ready { font-size: 13px; color: #15428b; padding-left: 8px; line-height: 19px; }
.st-right { display: flex; width: 204px; background: linear-gradient(#93b3df, #b8d1f1); border-left: 1px solid #6f92c2; position: relative; }
.st-cell { font-size: 13px; color: #111; line-height: 21px; white-space: nowrap; }
.st-ver { width: 93px; padding-left: 9px; border-right: 1px solid #d0e0f4; }
.st-fps { padding-left: 1px; }
.st-small { font-size: 11px; }
.grip { width: 11px; height: 11px; position: absolute; right: 1px; bottom: 1px; }
```
